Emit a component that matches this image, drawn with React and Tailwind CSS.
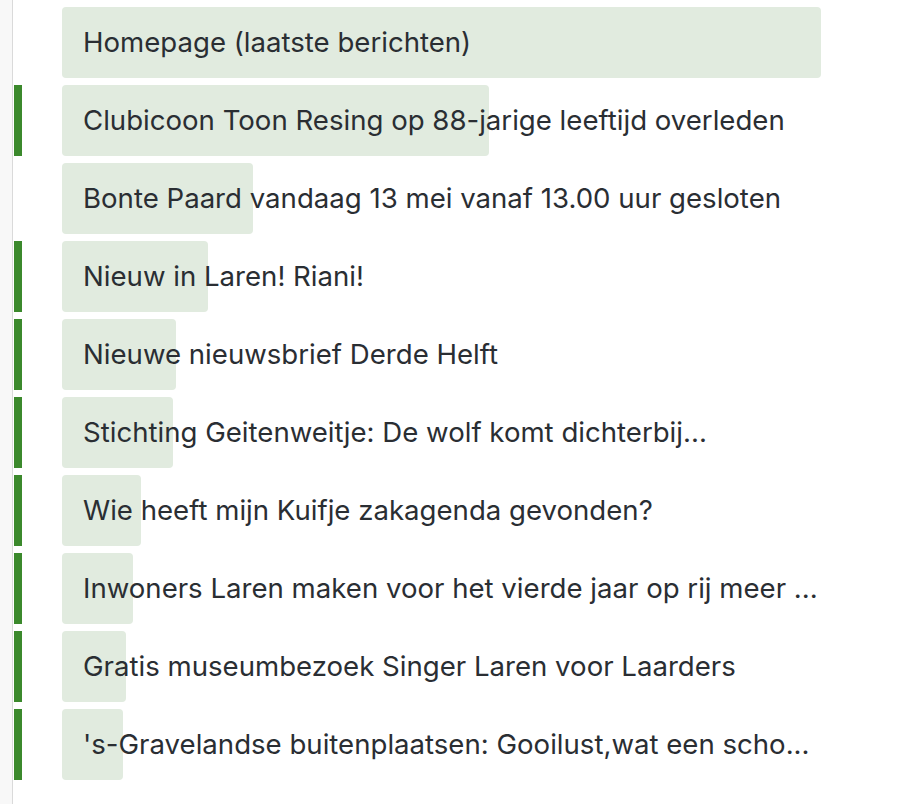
import React from 'react';

const items = [
    { title: 'Homepage (laatste berichten)', width: 759, marked: false },
    { title: 'Clubicoon Toon Resing op 88-jarige leeftijd overleden', width: 427, marked: true },
    { title: 'Bonte Paard vandaag 13 mei vanaf 13.00 uur gesloten', width: 191, marked: false },
    { title: 'Nieuw in Laren! Riani!', width: 146, marked: true },
    { title: 'Nieuwe nieuwsbrief Derde Helft', width: 114, marked: true },
    { title: 'Stichting Geitenweitje: De wolf komt dichterbij...', width: 111, marked: true },
    { title: 'Wie heeft mijn Kuifje zakagenda gevonden?', width: 79, marked: true },
    { title: 'Inwoners Laren maken voor het vierde jaar op rij meer ...', width: 71, marked: true },
    { title: 'Gratis museumbezoek Singer Laren voor Laarders', width: 64, marked: true },
    { title: "'s-Gravelandse buitenplaatsen: Gooilust,wat een scho...", width: 61, marked: true },
];

const Row = ({ title, width, marked }) => (
    <div className="flex h-[71px] items-stretch">
        <div className={`w-[8px] ${marked ? 'bg-[#3b892c]' : ''}`}></div>
        <div className="relative ml-[40px] w-[759px]">
            {/* visits bar */}
            <div
                className="absolute left-0 top-0 h-full rounded-[4px] bg-[#e1ebdf]"
                style={{ width }}
            ></div>
            <div className="relative flex h-full items-center pl-[21px]">
                <span className="whitespace-nowrap text-[27.6px] leading-none text-[#2a2e33]">{title}</span>
            </div>
        </div>
    </div>
);

const App = () => {
    return (
        <div className="flex min-h-[804px] bg-white" style={{ fontFamily: 'Inter, "Noto Sans", sans-serif' }}>
            <div className="w-[13px] shrink-0 border-r border-[#dadada] bg-[#f8f8f8]"></div>
            <div className="flex flex-col gap-[7px] pl-[1px] pt-[7px]">
                {items.map((item) => (
                    <Row key={item.title} {...item} />
                ))}
            </div>
        </div>
    );
};

export default App;
